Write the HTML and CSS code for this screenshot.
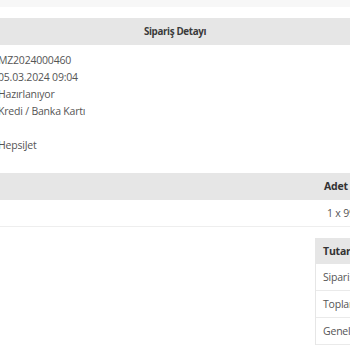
FILE: index.html
```html
<!DOCTYPE html>
<html lang="tr">
<head>
<meta charset="utf-8">
<link rel="stylesheet" href="styles.css">
</head>
<body>
<div class="page">
  <div class="topbar"></div>
  <div class="panel-head">Sipariş Detayı</div>
  <div class="info">
    <div class="line">MZ2024000460</div>
    <div class="line">05.03.2024 09:04</div>
    <div class="line">Hazırlanıyor</div>
    <div class="line">Kredi / Banka Kartı</div>
    <div class="line"></div>
    <div class="line">HepsiJet</div>
  </div>
  <div class="items">
    <div class="items-head"><span class="cut">Adet : Fiyat</span></div>
    <div class="items-row"><span class="cut">1 x 99,90 TL</span></div>
  </div>
  <div class="summary">
    <div class="sum-head">Tutarlar</div>
    <div class="sum-row">Sipariş Tutarı</div>
    <div class="sum-row">Toplam Tutar</div>
    <div class="sum-row">Genel Toplam</div>
  </div>
</div>
</body>
</html>
```
FILE: styles.css
```css
html, body {
  margin: 0;
  padding: 0;
  background: #fff;
}
.page {
  width: 350px;
  height: 350px;
  overflow: hidden;
  font-family: "Open Sans", "Noto Sans", sans-serif;
  font-size: 10.5px;
  letter-spacing: -0.2px;
  color: #555;
}
.topbar {
  height: 7px;
  background: #f7f7f7;
}
.panel-head {
  margin-top: 11px;
  height: 27px;
  line-height: 27px;
  background: #e6e6e6;
  text-align: center;
  font-weight: 700;
  font-size: 9.8px;
  letter-spacing: -0.35px;
  color: #3a3a3a;
}
.info {
  padding-top: 7px;
  margin-left: -2px;
}
.line {
  height: 17px;
  line-height: 17px;
  white-space: nowrap;
}
.items {
  margin-top: 19px;
}
.items-head {
  height: 27px;
  line-height: 27px;
  background: #e6e6e6;
  font-weight: 700;
  color: #333;
  white-space: nowrap;
  padding-left: 324px;
}
.items-row {
  height: 26px;
  line-height: 26px;
  border-bottom: 1px solid #eee;
  white-space: nowrap;
  padding-left: 327px;
}
.summary {
  margin-top: 11px;
  margin-left: 315px;
  width: 200px;
  border-left: 1px solid #e6e6e6;
}
.sum-head {
  height: 26px;
  line-height: 26px;
  background: #e6e6e6;
  font-weight: 700;
  color: #333;
  padding-left: 7px;
  white-space: nowrap;
}
.sum-row {
  height: 26px;
  line-height: 26px;
  border-bottom: 1px solid #eaeaea;
  padding-left: 7px;
  white-space: nowrap;
}
```
